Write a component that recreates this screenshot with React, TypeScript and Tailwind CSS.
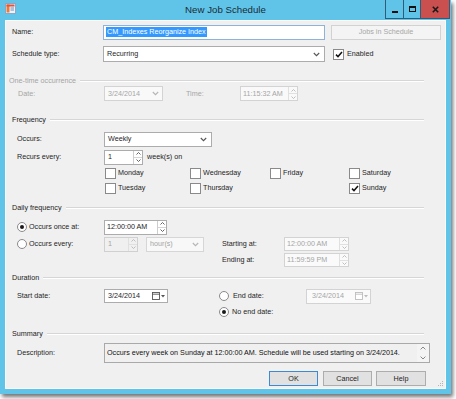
import React from "react";

const FONT = "font-['Liberation_Sans',Arial,sans-serif]";

function Chev({ color = "#555" }: { color?: string }) {
  return (
    <svg width="7" height="5" viewBox="0 0 7 5" className="shrink-0">
      <path d="M0.8 1 L3.5 3.7 L6.2 1" stroke={color} strokeWidth="1.1" fill="none" />
    </svg>
  );
}

function Spin({ disabled }: { disabled?: boolean }) {
  const c = disabled ? "#b8b8b8" : "#555";
  return (
    <div className={`ml-auto h-full w-[9px] flex flex-col border-l ${disabled ? "border-[#e0e0e0]" : "border-[#cdcdcd]"}`}>
      <div className={`flex-1 flex items-center justify-center border-b ${disabled ? "border-[#e0e0e0]" : "border-[#d5d5d5]"}`}>
        <svg width="5" height="3" viewBox="0 0 5 3">
          <path d="M0.5 2.5 L2.5 0.5 L4.5 2.5" stroke={c} fill="none" strokeWidth="0.9" />
        </svg>
      </div>
      <div className="flex-1 flex items-center justify-center">
        <svg width="5" height="3" viewBox="0 0 5 3">
          <path d="M0.5 0.5 L2.5 2.5 L4.5 0.5" stroke={c} fill="none" strokeWidth="0.9" />
        </svg>
      </div>
    </div>
  );
}

function Check({ checked }: { checked?: boolean }) {
  return (
    <div className="w-[11px] h-[11px] border border-[#8a8a8a] bg-white flex items-center justify-center shrink-0">
      {checked && (
        <svg width="8" height="7" viewBox="0 0 8 7">
          <path d="M1 3.6 L3 5.6 L7 1" stroke="#111" strokeWidth="1.5" fill="none" />
        </svg>
      )}
    </div>
  );
}

function Radio({ checked }: { checked?: boolean }) {
  return (
    <div className="w-[10px] h-[10px] rounded-full border border-[#8a8a8a] bg-white flex items-center justify-center shrink-0">
      {checked && <div className="w-[4px] h-[4px] rounded-full bg-[#1a1a1a]" />}
    </div>
  );
}

function Group({ title, disabled, pl }: { title: string; disabled?: boolean; pl: string }) {
  return (
    <div className={`h-[10px] flex items-center ${pl} pr-[21px]`}>
      <span className={disabled ? "text-[#a5a5a5]" : "text-[#222]"}>{title}</span>
      <div className="ml-[4px] flex-1 h-[2px] border-t border-[#d6d6d6] border-b border-b-white" />
    </div>
  );
}

function CalIcon({ disabled }: { disabled?: boolean }) {
  const c = disabled ? "#bdbdbd" : "#555";
  return (
    <div className="ml-auto mr-[2px] flex items-center gap-[1px]">
      <svg width="8" height="8" viewBox="0 0 8 8">
        <rect x="0.5" y="0.5" width="7" height="7" fill="#fff" stroke={c} strokeWidth="0.9" />
        <line x1="0.5" y1="2.2" x2="7.5" y2="2.2" stroke={c} strokeWidth="0.9" />
      </svg>
      <svg width="4" height="3" viewBox="0 0 4 3">
        <path d="M0 0 L4 0 L2 2.5 Z" fill={c} />
      </svg>
    </div>
  );
}

export default function App() {
  return (
    <div className={`w-[456px] h-[399px] bg-white ${FONT} text-[7.2px] leading-none text-[#1e1e1e] overflow-hidden`}>
      <div className="w-[451px] h-[394px] bg-[#60c4e9] flex flex-col shadow-[2px_3px_4px_rgba(0,0,0,0.55)]">
        {/* Title bar */}
        <div className="h-[20px] grid grid-cols-[1fr_auto_1fr] items-start">
          <div className="pl-[5px] pt-[3px]">
            <svg width="11" height="11" viewBox="0 0 11 11">
              <rect x="0.5" y="0.5" width="10" height="10" fill="#eef3fa" stroke="#8aa6c8" />
              <rect x="1.5" y="1.5" width="3" height="8" fill="#e97c3a" />
              <rect x="1.5" y="1.5" width="8" height="2" fill="#e0553a" />
              <line x1="5.5" y1="5" x2="9" y2="5" stroke="#6c8fbf" />
              <line x1="5.5" y1="7" x2="9" y2="7" stroke="#6c8fbf" />
            </svg>
          </div>
          <div className="pt-[5px] text-[9.7px] text-[#1b2a33]">New Job Schedule</div>
          <div className="flex justify-end pr-[1px]">
            <div className="flex h-[19px] border border-t-0 border-[#2f5c78]">
              <div className="w-[17px] flex items-end justify-center pb-[5px]">
                <div className="w-[6px] h-[2px] bg-[#111]" />
              </div>
              <div className="w-[17px] flex items-center justify-center border-l border-[#2f5c78]">
                <div className="w-[7px] h-[6px] border border-t-2 border-[#111]" />
              </div>
              <div className="w-[29px] bg-[#c9504e] flex items-center justify-center border-l border-[#2f5c78]">
                <svg width="7" height="7" viewBox="0 0 7 7">
                  <path d="M0.8 0.8 L6.2 6.2 M6.2 0.8 L0.8 6.2" stroke="#1a1a1a" strokeWidth="1.6" />
                </svg>
              </div>
            </div>
          </div>
        </div>

        {/* Client area */}
        <div className="mx-[5px] mb-[5px] flex-1 bg-[#f0f0f0] border border-[#fbfbfb] flex flex-col relative">
          {/* Name */}
          <div className="mt-[3px] h-[16px] flex items-center pl-[6px]">
            <div className="w-[91px]">Name:</div>
            <div className="w-[222px] h-[15px] border border-[#8fb3d8] bg-white flex items-center pl-[2px]">
              <span className="bg-[#3399ff] text-white px-[1px] py-[1.5px]">CM_Indexes Reorganize Index</span>
            </div>
            <div className="ml-[6px] w-[110px] h-[15px] border border-[#d2d2d2] bg-[#f4f4f4] flex items-center justify-center text-[#a7a7a7]">
              Jobs in Schedule
            </div>
          </div>

          {/* Schedule type */}
          <div className="mt-[6px] h-[16px] flex items-center pl-[6px]">
            <div className="w-[91px]">Schedule type:</div>
            <div className="w-[222px] h-[16px] border border-[#acacac] bg-white flex items-center pl-[3px] pr-[4px]">
              <span>Recurring</span>
              <span className="ml-auto"><Chev /></span>
            </div>
            <div className="ml-[8px]"><Check checked /></div>
            <span className="ml-[3px]">Enabled</span>
          </div>

          {/* One-time occurrence */}
          <div className="mt-[14px]"><Group title="One-time occurrence" disabled pl="pl-[3px]" /></div>
          <div className="h-[15px] flex items-center pl-[12px] text-[#a5a5a5]">
            <div className="w-[86px]">Date:</div>
            <div className="w-[59px] h-[15px] border border-[#d3d3d3] bg-[#f9f9f9] flex items-center pl-[3px] pr-[3px]">
              <span>3/24/2014</span>
              <span className="ml-auto"><Chev color="#b5b5b5" /></span>
            </div>
            <div className="ml-[23px] w-[54px]">Time:</div>
            <div className="w-[58px] h-[15px] border border-[#d3d3d3] bg-[#f9f9f9] flex items-center pl-[2px]">
              <span>11:15:32 AM</span>
              <Spin disabled />
            </div>
          </div>

          {/* Frequency */}
          <div className="mt-[14px]"><Group title="Frequency" pl="pl-[6px]" /></div>
          <div className="mt-[6px] h-[16px] flex items-center pl-[11px]">
            <div className="w-[87px]">Occurs:</div>
            <div className="w-[108px] h-[15px] border border-[#acacac] bg-white flex items-center pl-[3px] pr-[4px]">
              <span>Weekly</span>
              <span className="ml-auto"><Chev /></span>
            </div>
          </div>
          <div className="mt-[2px] h-[16px] flex items-center pl-[11px]">
            <div className="w-[87px]">Recurs every:</div>
            <div className="w-[39px] h-[15px] border border-[#acacac] bg-white flex items-center pl-[3px]">
              <span>1</span>
              <Spin />
            </div>
            <span className="ml-[4px]">week(s) on</span>
          </div>
          <div className="mt-[1px] h-[14px] flex items-center pl-[99px]">
            <div className="w-[85px] flex items-center"><Check /><span className="ml-[2px]">Monday</span></div>
            <div className="w-[80px] flex items-center"><Check /><span className="ml-[2px]">Wednesday</span></div>
            <div className="w-[79px] flex items-center"><Check /><span className="ml-[2px]">Friday</span></div>
            <div className="flex items-center"><Check /><span className="ml-[2px]">Saturday</span></div>
          </div>
          <div className="mt-[1px] h-[14px] flex items-center pl-[99px]">
            <div className="w-[85px] flex items-center"><Check /><span className="ml-[2px]">Tuesday</span></div>
            <div className="w-[80px] flex items-center"><Check /><span className="ml-[2px]">Thursday</span></div>
            <div className="w-[79px]" />
            <div className="flex items-center"><Check checked /><span className="ml-[2px]">Sunday</span></div>
          </div>

          {/* Daily frequency */}
          <div className="mt-[8px]"><Group title="Daily frequency" pl="pl-[6px]" /></div>
          <div className="mt-[6px] h-[16px] flex items-center pl-[11px]">
            <div className="w-[87px] flex items-center"><Radio checked /><span className="ml-[2px]">Occurs once at:</span></div>
            <div className="w-[63px] h-[15px] border border-[#acacac] bg-white flex items-center pl-[2px]">
              <span>12:00:00 AM</span>
              <Spin />
            </div>
          </div>
          <div className="mt-[1px] h-[16px] flex items-center pl-[11px]">
            <div className="w-[87px] flex items-center"><Radio /><span className="ml-[2px]">Occurs every:</span></div>
            <div className="w-[34px] h-[15px] border border-[#d0d0d0] bg-[#f0f0f0] flex items-center pl-[3px] text-[#a5a5a5]">
              <span>1</span>
              <Spin disabled />
            </div>
            <div className="ml-[8px] w-[58px] h-[15px] border border-[#d6d6d6] bg-[#f8f8f8] flex items-center pl-[3px] pr-[4px] text-[#a5a5a5]">
              <span>hour(s)</span>
              <span className="ml-auto"><Chev color="#b5b5b5" /></span>
            </div>
            <div className="ml-[18px] w-[62px]">Starting at:</div>
            <div className="w-[65px] h-[14px] border border-[#d3d3d3] bg-[#fafafa] flex items-center pl-[2px] text-[#a5a5a5]">
              <span>12:00:00 AM</span>
              <Spin disabled />
            </div>
          </div>
          <div className="h-[16px] flex items-center pl-[216px]">
            <div className="w-[62px]">Ending at:</div>
            <div className="w-[65px] h-[14px] border border-[#d3d3d3] bg-[#fafafa] flex items-center pl-[2px] text-[#a5a5a5]">
              <span>11:59:59 PM</span>
              <Spin disabled />
            </div>
          </div>

          {/* Duration */}
          <div className="mt-[5px]"><Group title="Duration" pl="pl-[6px]" /></div>
          <div className="mt-[5px] h-[16px] flex items-center pl-[11px]">
            <div className="w-[87px]">Start date:</div>
            <div className="w-[64px] h-[14px] border border-[#acacac] bg-white flex items-center pl-[3px]">
              <span>3/24/2014</span>
              <CalIcon />
            </div>
            <div className="ml-[51px]"><Radio /></div>
            <div className="w-[77px] pl-[4px]">End date:</div>
            <div className="w-[65px] h-[15px] border border-[#d3d3d3] bg-[#fafafa] flex items-center pl-[5px] text-[#a5a5a5]">
              <span>3/24/2014</span>
              <CalIcon disabled />
            </div>
          </div>
          <div className="h-[16px] flex items-center pl-[213px]">
            <Radio checked />
            <span className="ml-[3px]">No end date:</span>
          </div>

          {/* Summary */}
          <div className="mt-[9px]"><Group title="Summary" pl="pl-[6px]" /></div>
          <div className="mt-[4px] h-[20px] flex items-start pl-[11px]">
            <div className="w-[87px] pt-[6px]">Description:</div>
            <div className="w-[326px] h-[20px] border border-[#a9a9a9] bg-[#f0f0f0] flex">
              <div className="flex-1 pl-[2px] pt-[5px] text-[#111]">
                Occurs every week on Sunday at 12:00:00 AM. Schedule will be used starting on 3/24/2014.
              </div>
              <div className="w-[12px] flex flex-col justify-between items-center py-[2px] bg-[#f4f4f4]">
                <svg width="6" height="4" viewBox="0 0 6 4"><path d="M0.6 3.4 L3 1 L5.4 3.4" stroke="#888" fill="none" strokeWidth="1" /></svg>
                <svg width="6" height="4" viewBox="0 0 6 4"><path d="M0.6 0.6 L3 3 L5.4 0.6" stroke="#888" fill="none" strokeWidth="1" /></svg>
              </div>
            </div>
          </div>

          {/* Buttons */}
          <div className="mt-[8px] h-[15px] flex justify-end pr-[19px]">
            <div className="w-[49px] h-[15px] border border-[#3d8ad1] bg-[#e1e1e1] flex items-center justify-center">OK</div>
            <div className="ml-[5px] w-[49px] h-[15px] border border-[#adadad] bg-[#e1e1e1] flex items-center justify-center">Cancel</div>
            <div className="ml-[4px] w-[50px] h-[15px] border border-[#adadad] bg-[#e1e1e1] flex items-center justify-center">Help</div>
          </div>

          {/* resize grip */}
          <svg className="absolute right-[1px] bottom-[1px]" width="8" height="8" viewBox="0 0 8 8">
            <rect x="6" y="2" width="1" height="1" fill="#b5b5b5" />
            <rect x="4" y="4" width="1" height="1" fill="#b5b5b5" />
            <rect x="6" y="4" width="1" height="1" fill="#b5b5b5" />
            <rect x="2" y="6" width="1" height="1" fill="#b5b5b5" />
            <rect x="4" y="6" width="1" height="1" fill="#b5b5b5" />
            <rect x="6" y="6" width="1" height="1" fill="#b5b5b5" />
          </svg>
        </div>
      </div>
    </div>
  );
}
